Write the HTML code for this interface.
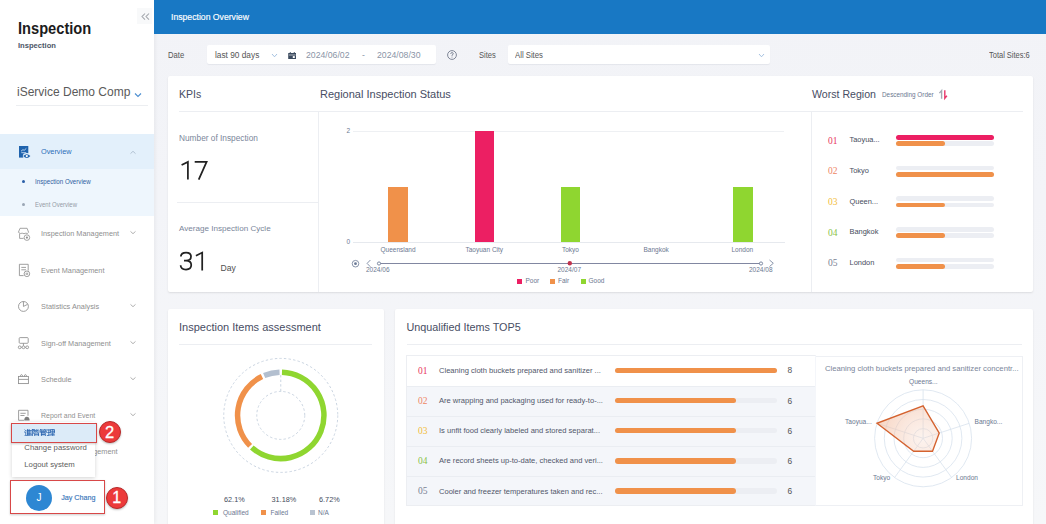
<!DOCTYPE html>
<html><head><meta charset="utf-8">
<style>
*{margin:0;padding:0;box-sizing:border-box}
html,body{width:1046px;height:524px;overflow:hidden;background:linear-gradient(#f2f3f7 0,#f3f4f8 200px,#f6f7f9 524px);font-family:"Liberation Sans",sans-serif;position:relative}
.a{position:absolute;white-space:nowrap}
.sb{position:absolute;left:0;top:0;width:154px;height:524px;background:#fff;box-shadow:1px 0 4px rgba(0,0,0,.06)}
.mi{position:absolute;left:41px;font-size:7.5px;color:#8f8f8f;line-height:10px;transform:scaleX(0.975);transform-origin:0 0}
.chev{position:absolute;left:129px;width:8px;height:5px}
.card{position:absolute;background:#fff;box-shadow:0 1px 2px rgba(0,0,0,.1);border-radius:2px}
.ttl{position:absolute;font-size:11px;color:#474d63;line-height:14px}
.lbl{font-size:6.5px;color:#6c7891;line-height:8px}
.rk{font-family:"Liberation Serif",serif;font-size:9.5px;line-height:10px}
</style></head><body>

<!-- sidebar -->
<div class="sb">
  <div class="a" style="left:137px;top:8px;width:15px;height:16px;background:#f8f9fa"></div>
  <svg class="a" style="left:140px;top:12px" width="10" height="9" viewBox="0 0 10 9"><path d="M5 1.5 L2 4.6 L5 7.7 M9 1.5 L6 4.6 L9 7.7" fill="none" stroke="#a3a7ad" stroke-width="1.05"/></svg>
  <div class="a" style="left:17.5px;top:17.5px;font-size:16.3px;font-weight:bold;color:#1c1c1c;line-height:20px;transform:scaleX(0.9);transform-origin:0 0">Inspection</div>
  <div class="a" style="left:18px;top:41px;font-size:7.6px;font-weight:bold;color:#4d5667;line-height:10px">Inspection</div>
  <div class="a" style="left:17px;top:84.5px;font-size:12px;color:#5a5a5a;line-height:15px">iService Demo Comp</div>
  <svg class="a" style="left:134px;top:92px" width="8" height="6" viewBox="0 0 8 6"><path d="M1 1.5 L4 4.5 L7 1.5" fill="none" stroke="#4a8ed0" stroke-width="1.1"/></svg>
  <div class="a" style="left:16px;top:105px;width:132px;height:1px;background:#eceef1"></div>

  <!-- overview -->
  <div class="a" style="left:0;top:133.5px;width:154px;height:35.5px;background:#e3f0fb"></div>
  <div class="a" style="left:0;top:169px;width:154px;height:47px;background:#eef6fd"></div>
  <svg class="a" style="left:12px;top:140px" width="24" height="24" viewBox="12 140 24 24"><rect x="19" y="146" width="9.3" height="11.6" fill="#1f63ad"/><path d="M21 151.2 L23 149.6 L24.1 150.4 L26.3 148.4 M21.3 152.7 L26.2 152.7" stroke="#dbe9f7" stroke-width="0.8" fill="none"/><ellipse cx="26.8" cy="156.1" rx="4" ry="3" fill="#e4f0fb"/><path d="M23.2 156.1 Q26.8 152.2 30.4 156.1 Q26.8 160 23.2 156.1 Z" fill="#1f63ad"/><circle cx="26.8" cy="156.1" r="1.1" fill="#fff"/></svg>
  <div class="mi" style="top:147px;color:#2a6db8">Overview</div>
  <svg class="chev" style="top:149.5px" viewBox="0 0 8 5"><path d="M1.5 3.6 L4 1.3 L6.5 3.6" fill="none" stroke="#a9b9cb" stroke-width="0.85"/></svg>
  <div class="a" style="left:22px;top:180px;width:3px;height:3px;border-radius:50%;background:#2a5fa8"></div>
  <div class="a" style="left:35px;top:177px;font-size:6.8px;color:#2f5f9f;line-height:9px;transform:scaleX(0.91);transform-origin:0 0">Inspection Overview</div>
  <div class="a" style="left:22px;top:203px;width:3px;height:3px;border-radius:50%;background:#9aa6b5"></div>
  <div class="a" style="left:35px;top:200.3px;font-size:6.6px;color:#959ca6;line-height:9px;transform:scaleX(0.91);transform-origin:0 0">Event Overview</div>

  <!-- inspection mgmt -->
  <svg class="a" style="left:12px;top:222px" width="24" height="24" viewBox="12 222 24 24"><g fill="none" stroke="#8e8e8e" stroke-width="0.8"><path d="M20 228.3 L27.1 228.3 L28.6 232.3 Q27.6 234.2 25.8 233.2 Q24 234.2 22.2 233.2 Q20.4 234.2 18.4 232.3 Z"/><path d="M19.6 233.6 L19.6 238.4 L23.6 238.4"/><circle cx="26.9" cy="237.6" r="2.8"/></g><circle cx="26.9" cy="237.6" r="1.1" fill="#8e8e8e"/></svg>
  <div class="mi" style="top:229px">Inspection Management</div>
  <svg class="chev" style="top:230.4px" viewBox="0 0 8 5"><path d="M1.5 1.4 L4 3.7 L6.5 1.4" fill="none" stroke="#a3a3a3" stroke-width="0.85"/></svg>

  <svg class="a" style="left:12px;top:258px" width="24" height="24" viewBox="12 258 24 24"><g fill="none" stroke="#8e8e8e" stroke-width="0.85"><path d="M23.6 275.6 L19.4 275.6 L19.4 264.3 L28.2 264.3 L28.2 270.6"/><path d="M21.3 267.4 L26 267.4 M21.3 269.8 L26 269.8"/><circle cx="26.9" cy="273.8" r="2.8"/><rect x="26" y="273.1" width="1.8" height="1.4" stroke-width="0.6"/></g></svg>
  <div class="mi" style="top:265.5px">Event Management</div>

  <svg class="a" style="left:12px;top:295px" width="24" height="24" viewBox="12 295 24 24"><g fill="none" stroke="#8e8e8e" stroke-width="0.85"><circle cx="23.45" cy="306.45" r="4.95"/><path d="M23.45 301.5 L23.45 306.45 L27.6 304.3"/></g></svg>
  <div class="mi" style="top:302px">Statistics Analysis</div>
  <svg class="chev" style="top:303px" viewBox="0 0 8 5"><path d="M1.5 1.4 L4 3.7 L6.5 1.4" fill="none" stroke="#a3a3a3" stroke-width="0.85"/></svg>

  <svg class="a" style="left:12px;top:331px" width="24" height="24" viewBox="12 331 24 24"><g fill="none" stroke="#8e8e8e" stroke-width="0.85"><rect x="19.2" y="337.6" width="9" height="5.7" rx="0.9"/><path d="M23.45 343.3 L23.45 345.8 M21.1 347.3 L21.9 347.3 M25 347.3 L25.8 347.3"/><circle cx="19.7" cy="347.3" r="1.4"/><circle cx="23.45" cy="347.3" r="1.4"/><circle cx="27.2" cy="347.3" r="1.4"/></g></svg>
  <div class="mi" style="top:338.5px">Sign-off Management</div>
  <svg class="chev" style="top:339.6px" viewBox="0 0 8 5"><path d="M1.5 1.4 L4 3.7 L6.5 1.4" fill="none" stroke="#a3a3a3" stroke-width="0.85"/></svg>

  <svg class="a" style="left:12px;top:367px" width="24" height="24" viewBox="12 367 24 24"><g fill="none" stroke="#8e8e8e" stroke-width="0.85"><rect x="18.5" y="376.4" width="9.9" height="7.2"/><path d="M18.5 379.4 L28.4 379.4"/><path d="M20.6 376.4 L20.6 375.2 Q21.5 373.9 22.4 375.2 L22.4 376.4 M24.5 376.4 L24.5 375.2 Q25.4 373.9 26.3 375.2 L26.3 376.4"/></g></svg>
  <div class="mi" style="top:374.5px">Schedule</div>
  <svg class="chev" style="top:375.7px" viewBox="0 0 8 5"><path d="M1.5 1.4 L4 3.7 L6.5 1.4" fill="none" stroke="#a3a3a3" stroke-width="0.85"/></svg>

  <svg class="a" style="left:12px;top:403px" width="24" height="24" viewBox="12 403 24 24"><g fill="none" stroke="#8e8e8e" stroke-width="0.85"><path d="M24 420.3 L18.6 420.3 L18.6 410.3 L28 410.3 L28 415.8"/><path d="M20.4 413.3 L25.7 413.3 M20.4 415.5 L24.5 415.5"/></g><path d="M24.2 420.6 Q24.2 416.8 26.9 416.8 Q29.6 416.8 29.6 420.6 Z" fill="#7d7d7d"/></svg>
  <div class="mi" style="top:411px;font-size:7.15px">Report and Event</div>
  <svg class="chev" style="top:411.6px" viewBox="0 0 8 5"><path d="M1.5 1.4 L4 3.7 L6.5 1.4" fill="none" stroke="#a3a3a3" stroke-width="0.85"/></svg>

  <div class="mi" style="top:447px;left:43.5px">Approval Management</div>

  <!-- popup -->
  <div class="a" style="left:12px;top:422px;width:83px;height:55px;background:#fff;box-shadow:0 1px 4px rgba(0,0,0,.18)"></div>
  <div class="a" style="left:10.8px;top:422.6px;width:86.3px;height:20px;background:#dcebf8;border:1.7px solid #d84848;box-shadow:0 1px 2px rgba(0,0,0,.2)"></div>
  <svg class="a" style="left:24px;top:428.5px" width="31" height="7.5" viewBox="0 0 32 8" preserveAspectRatio="none"><g fill="none" stroke="#2b66b0" stroke-width="0.85" stroke-linecap="square">
<path d="M1 1 L1.6 1.7 M0.5 3.2 L1.8 3.2 L1.8 6.3 M0.3 7.6 Q2 6.6 4 7.2 L7.8 7.6"/>
<path d="M3.8 0.3 L3 2 M3.6 1.5 L3.6 6.3 M5.3 0.3 L5.3 6.2 M3.6 1.6 L7.6 1.6 M3.6 3.1 L7.3 3.1 M3.6 4.6 L7.3 4.6 M3.6 6.1 L7.7 6.1"/>
<path d="M8.7 0.5 L8.7 7.8 M8.7 0.5 L10.2 0.5 L9.4 2.7 L10.3 4 L9.3 5"/>
<path d="M11 0.5 L11 3.2 L12.5 2.8 M11 1.8 L12.3 1.6 M13.3 0.5 L13.3 3 Q13.4 3.5 15.5 3.2 M13.3 1.8 L15 1.2 M11.5 4.3 L15 4.3 L15 7.7 L11.5 7.7 Z M11.5 6 L15 6"/>
<path d="M17.2 0.3 L16.5 1.8 M17 1 L19.3 1 M18 1 L18.5 1.8 M21 0.3 L20.3 1.8 M20.8 1 L23.5 1 M22 1 L22.5 1.8 M16.8 3.5 L16.8 2.6 L23.2 2.6 L23.2 3.5 M18 3.4 L18 7.8 M18 3.7 L22 3.7 L22 5.3 L18 5.3 M18 5.9 L22.3 5.9 L22.3 7.7 L18 7.7"/>
<path d="M24.3 1 L27 1 M24.5 3.8 L26.8 3.8 M25.6 1 L25.6 6.8 M24.2 7 L27.2 6.2 M27.8 0.6 L31.5 0.6 L31.5 4.2 L27.8 4.2 Z M27.8 2.4 L31.5 2.4 M29.65 0.6 L29.65 7.4 M28.2 5.7 L31.2 5.7 M27.5 7.5 L31.9 7.5"/>
</g></svg>
  <div class="a" style="left:24.3px;top:443.3px;font-size:7.75px;color:#5c5c5c;line-height:10px">Change password</div>
  <div class="a" style="left:24.3px;top:459.5px;font-size:7.75px;color:#5c5c5c;line-height:10px">Logout system</div>
  <div class="a" style="left:98.7px;top:421px;width:22px;height:22px;border-radius:50%;background:#ec3a3a;border:1px solid #b92a2a;box-shadow:0 1px 2px rgba(0,0,0,.25);color:#fff;font-size:16.5px;-webkit-text-stroke:0.3px #fff;text-align:center;line-height:20px">2</div>

  <div class="a" style="left:9.8px;top:480.4px;width:95.6px;height:33.4px;border:1.7px solid #d84848;box-shadow:0 1px 2px rgba(0,0,0,.2)"></div>
  <div class="a" style="left:26px;top:485px;width:26px;height:26px;border-radius:50%;background:#2d87d3;color:#fff;font-size:10px;text-align:center;line-height:26px">J</div>
  <div class="a" style="left:61.2px;top:493px;font-size:7.2px;color:#3b78bb;-webkit-text-stroke:0.15px #3b78bb;line-height:10px">Jay Chang</div>
  <div class="a" style="left:105.6px;top:487.3px;width:22px;height:22px;border-radius:50%;background:#ec3a3a;border:1px solid #b92a2a;box-shadow:0 1px 2px rgba(0,0,0,.25);color:#fff;font-size:16px;-webkit-text-stroke:0.3px #fff;text-align:center;line-height:20px">1</div>
</div>

<!-- header -->
<div class="a" style="left:154px;top:0;width:892px;height:34px;background:#1878c4"></div>
<div class="a" style="left:171px;top:11.7px;font-size:8.9px;color:#fff;line-height:10px;-webkit-text-stroke:0.15px #fff;transform:scaleX(0.975);transform-origin:0 0">Inspection Overview</div>

<!-- filters -->
<div class="a" style="left:167.5px;top:49.9px;font-size:8.6px;color:#555;line-height:10px;transform:scaleX(0.89);transform-origin:0 0">Date</div>
<div class="a" style="left:207px;top:45px;width:229px;height:19px;background:#fff;border-radius:2px;box-shadow:0 1px 1px rgba(40,50,80,.07)"></div>
<div class="a" style="left:215px;top:50px;font-size:8.3px;color:#555;line-height:10px">last 90 days</div>
<svg class="a" style="left:271px;top:53px" width="7" height="5" viewBox="0 0 7 5"><path d="M1 1 L3.5 3.8 L6 1" fill="none" stroke="#8fb3d9" stroke-width="0.8"/></svg>
<svg class="a" style="left:287.5px;top:51.6px" width="8.5" height="7.2" viewBox="0 0 8.5 7.2"><rect x="0.2" y="1" width="8.1" height="6.2" rx="0.5" fill="#3b4a5e"/><rect x="0.9" y="2.7" width="6.7" height="0.6" fill="#fff"/><rect x="4.8" y="4.1" width="2" height="1.9" fill="#fff"/><rect x="1.8" y="0" width="0.9" height="1.5" fill="#3b4a5e"/><rect x="5.8" y="0" width="0.9" height="1.5" fill="#3b4a5e"/></svg>
<div class="a" style="left:306px;top:50px;font-size:8.7px;color:#8a94a6;line-height:10px">2024/06/02</div>
<div class="a" style="left:362px;top:50px;font-size:8.7px;color:#8a94a6;line-height:10px">-</div>
<div class="a" style="left:377px;top:50px;font-size:8.7px;color:#8a94a6;line-height:10px">2024/08/30</div>
<svg class="a" style="left:446px;top:49px" width="12" height="12" viewBox="0 0 12 12"><circle cx="6" cy="6" r="4.4" fill="none" stroke="#737b8c" stroke-width="0.9"/><path d="M4.7 4.9 Q4.7 3.6 6 3.6 Q7.3 3.6 7.3 4.8 Q7.3 5.6 6 6 L6 6.8" fill="none" stroke="#737b8c" stroke-width="0.85"/><circle cx="6" cy="8.1" r="0.5" fill="#737b8c"/></svg>
<div class="a" style="left:478.8px;top:49.9px;font-size:8.6px;color:#555;line-height:10px;transform:scaleX(0.88);transform-origin:0 0">Sites</div>
<div class="a" style="left:508px;top:45px;width:262px;height:19px;background:#fff;border-radius:2px;box-shadow:0 1px 1px rgba(40,50,80,.07)"></div>
<div class="a" style="left:514.5px;top:49.9px;font-size:8.6px;color:#555;line-height:10px;transform:scaleX(0.9);transform-origin:0 0">All Sites</div>
<svg class="a" style="left:758px;top:53px" width="7" height="5" viewBox="0 0 7 5"><path d="M1 1 L3.5 3.8 L6 1" fill="none" stroke="#8fb3d9" stroke-width="0.8"/></svg>
<div class="a" style="left:988.5px;top:49.9px;font-size:8.6px;color:#555;line-height:10px;transform:scaleX(0.87);transform-origin:0 0">Total Sites:6</div>

<!-- card 1 -->
<div class="card" style="left:168px;top:76px;width:865px;height:216px"></div>
<div class="ttl" style="left:179px;top:87px;font-size:10.5px">KPIs</div>
<div class="ttl" style="left:320px;top:86.5px">Regional Inspection Status</div>
<div class="ttl" style="left:812px;top:87px;font-size:10.6px">Worst Region</div>
<div class="a" style="left:882px;top:90px;font-size:6.36px;color:#6c7891;line-height:9px">Descending Order</div>
<svg class="a" style="left:935px;top:86px" width="16" height="16" viewBox="935 86 16 16"><path d="M941.6 98.8 L941.6 90.6 L939.4 93.1" fill="none" stroke="#a3a9b3" stroke-width="1.4"/><path d="M944.8 90.2 L944.8 98.3 L946.9 95.8" fill="none" stroke="#e8386a" stroke-width="1.4"/></svg>
<div class="a" style="left:179px;top:110.5px;width:139px;height:1px;background:#eceef2"></div>
<div class="a" style="left:318px;top:110.5px;width:705px;height:1px;background:#eceef2"></div>
<div class="a" style="left:318px;top:111px;width:1px;height:181px;background:#eceef2"></div>
<div class="a" style="left:811px;top:111px;width:1px;height:181px;background:#eceef2"></div>

<div class="a" style="left:179px;top:133px;font-size:8.3px;color:#7a869a;line-height:10px">Number of Inspection</div>
<svg class="a" style="left:0;top:0" width="400" height="300" viewBox="0 0 400 300"><path d="M181.6 165.0 L187.9 161.9 L187.9 179.6 M194.7 161.95 L206.6 161.95 L198.7 179.6" fill="none" stroke="#222" stroke-width="1.75" stroke-linejoin="miter"/></svg>
<div class="a" style="left:177px;top:202px;width:141px;height:1px;background:#eceef2"></div>
<div class="a" style="left:179px;top:224px;font-size:8.1px;color:#7a869a;line-height:10px">Average Inspection Cycle</div>
<svg class="a" style="left:0;top:0" width="400" height="300" viewBox="0 0 400 300"><path d="M180.9 256.6 C180.9 254.1 183.1 252.55 186.1 252.55 C189.1 252.55 191.0 254.2 191.0 256.5 C191.0 258.9 189.1 260.6 186.0 260.6 L184.0 260.6 M186.0 260.6 C189.4 260.6 191.25 262.5 191.25 265.1 C191.25 267.9 189.0 269.55 186.0 269.55 C182.9 269.55 180.65 267.9 180.65 265.3 M195.9 255.7 L202.2 252.55 L202.2 270.4" fill="none" stroke="#222" stroke-width="1.75"/></svg>
<div class="a" style="left:220.5px;top:262.5px;font-size:8.6px;color:#505050;line-height:10px">Day</div>

<!-- bar chart -->
<div class="a lbl" style="left:346.5px;top:126.5px">2</div>
<div class="a lbl" style="left:346.5px;top:237.5px">0</div>
<div class="a" style="left:353px;top:130.5px;width:431px;height:1px;background:#eef0f3"></div>
<div class="a" style="left:353px;top:241.5px;width:432px;height:1px;background:#e6e9ee"></div>
<div class="a" style="left:388px;top:186.5px;width:19.5px;height:55.5px;background:#f0914a"></div>
<div class="a" style="left:474.5px;top:130.5px;width:19.5px;height:111.5px;background:#ec1f63"></div>
<div class="a" style="left:560.5px;top:186.5px;width:19.5px;height:55.5px;background:#8fd630"></div>
<div class="a" style="left:733px;top:186.5px;width:19.5px;height:55.5px;background:#8fd630"></div>
<div class="a lbl" style="left:380.5px;top:245.5px">Queensland</div>
<div class="a lbl" style="left:465.5px;top:245.5px">Taoyuan City</div>
<div class="a lbl" style="left:562px;top:245.5px">Tokyo</div>
<div class="a lbl" style="left:643.5px;top:245.5px">Bangkok</div>
<div class="a lbl" style="left:731.5px;top:245.5px">London</div>
<svg class="a" style="left:350px;top:258px" width="430" height="12" viewBox="350 258 430 12"><circle cx="355.5" cy="263.7" r="3.3" fill="none" stroke="#6b7a96" stroke-width="0.8"/><circle cx="355.5" cy="263.7" r="1.4" fill="#6b7a96"/><path d="M370.4 260 L367.1 263.4 L370.4 266.8" fill="none" stroke="#6b7a96" stroke-width="0.8"/><path d="M379 263.5 L761 263.5" stroke="#7a819c" stroke-width="0.95"/><circle cx="379" cy="263.5" r="1.6" fill="#fff" stroke="#5e6d8c" stroke-width="0.8"/><circle cx="761" cy="263.5" r="1.6" fill="#fff" stroke="#5e6d8c" stroke-width="0.8"/><circle cx="569.8" cy="263.3" r="2.2" fill="#c0334d"/><path d="M769.5 260 L773.3 263.3 L769.5 266.5" fill="none" stroke="#6b7a96" stroke-width="0.8"/></svg>
<div class="a lbl" style="left:366px;top:265.5px">2024/06</div>
<div class="a lbl" style="left:557.5px;top:265.5px">2024/07</div>
<div class="a lbl" style="left:749px;top:265.5px">2024/08</div>
<div class="a" style="left:517px;top:278.5px;width:5.2px;height:5.2px;background:#ec1f63"></div>
<div class="a lbl" style="left:525.5px;top:277px">Poor</div>
<div class="a" style="left:550px;top:278.5px;width:5.2px;height:5.2px;background:#f0914a"></div>
<div class="a lbl" style="left:558px;top:277px">Fair</div>
<div class="a" style="left:580.5px;top:278.5px;width:5.2px;height:5.2px;background:#8fd630"></div>
<div class="a lbl" style="left:588.5px;top:277px">Good</div>

<!-- worst region -->
<div class="a rk" style="left:828px;top:135.5px;color:#e8385e">01</div>
<div class="a" style="left:849.5px;top:135.3px;font-size:7.45px;color:#464c5c;line-height:9px">Taoyua...</div>
<div class="a" style="left:896px;top:134.9px;width:97.8px;height:4.8px;border-radius:3px;background:#ec1f63"></div>
<div class="a" style="left:896px;top:141.2px;width:97.8px;height:4.8px;border-radius:3px;background:#eceef3"></div>
<div class="a" style="left:896px;top:141.2px;width:49.2px;height:4.8px;border-radius:3px;background:#f0914a"></div>
<div class="a rk" style="left:828px;top:166.2px;color:#ee8666">02</div>
<div class="a" style="left:849.5px;top:166.0px;font-size:7.45px;color:#464c5c;line-height:9px">Tokyo</div>
<div class="a" style="left:896px;top:165.6px;width:97.8px;height:4.8px;border-radius:3px;background:#eceef3"></div>
<div class="a" style="left:896px;top:171.9px;width:97.8px;height:4.8px;border-radius:3px;background:#eceef3"></div>
<div class="a" style="left:896px;top:171.9px;width:97.8px;height:4.8px;border-radius:3px;background:#f0914a"></div>
<div class="a rk" style="left:828px;top:196.9px;color:#f2bd3c">03</div>
<div class="a" style="left:849.5px;top:196.7px;font-size:7.45px;color:#464c5c;line-height:9px">Queen...</div>
<div class="a" style="left:896px;top:196.3px;width:97.8px;height:4.8px;border-radius:3px;background:#eceef3"></div>
<div class="a" style="left:896px;top:202.6px;width:97.8px;height:4.8px;border-radius:3px;background:#eceef3"></div>
<div class="a" style="left:896px;top:202.6px;width:49.2px;height:4.8px;border-radius:3px;background:#f0914a"></div>
<div class="a rk" style="left:828px;top:227.6px;color:#8bc34a">04</div>
<div class="a" style="left:849.5px;top:227.4px;font-size:7.45px;color:#464c5c;line-height:9px">Bangkok</div>
<div class="a" style="left:896px;top:227.0px;width:97.8px;height:4.8px;border-radius:3px;background:#eceef3"></div>
<div class="a" style="left:896px;top:233.3px;width:97.8px;height:4.8px;border-radius:3px;background:#eceef3"></div>
<div class="a" style="left:896px;top:233.3px;width:49.2px;height:4.8px;border-radius:3px;background:#f0914a"></div>
<div class="a rk" style="left:828px;top:258.3px;color:#7a8294">05</div>
<div class="a" style="left:849.5px;top:258.1px;font-size:7.45px;color:#464c5c;line-height:9px">London</div>
<div class="a" style="left:896px;top:257.7px;width:97.8px;height:4.8px;border-radius:3px;background:#eceef3"></div>
<div class="a" style="left:896px;top:264.0px;width:97.8px;height:4.8px;border-radius:3px;background:#eceef3"></div>
<div class="a" style="left:896px;top:264.0px;width:49.2px;height:4.8px;border-radius:3px;background:#f0914a"></div>

<!-- card 2 -->
<div class="card" style="left:168px;top:309px;width:216px;height:220px"></div>
<div class="ttl" style="left:179px;top:319.5px">Inspection Items assessment</div>
<div class="a" style="left:179px;top:344px;width:193px;height:1px;background:#eceef2"></div>
<svg class="a" style="left:0;top:0" width="1046" height="524" viewBox="0 0 1046 524">
<circle cx="280.75" cy="415.4" r="57" fill="none" stroke="#c5d0de" stroke-width="0.9" stroke-dasharray="2.4 2.2"/>
<circle cx="280.75" cy="415.4" r="24" fill="none" stroke="#c5d0de" stroke-width="0.9" stroke-dasharray="2.4 2.2"/>
<path d="M280.75 375.0 L280.75 391.4" stroke="#c5d0de" stroke-width="0.9" stroke-dasharray="2.4 2.2"/>
<path d="M281.96 372.22 A43.2 43.2 0 1 1 251.84 447.50" fill="none" stroke="#8fd630" stroke-width="5.5"/>
<path d="M250.10 445.84 A43.2 43.2 0 0 1 261.95 376.51" fill="none" stroke="#f0914a" stroke-width="5.5"/>
<path d="M264.15 375.52 A43.2 43.2 0 0 1 279.54 372.22" fill="none" stroke="#b3bfcf" stroke-width="5.5"/>
</svg>
<div class="a" style="left:224px;top:494.5px;font-size:7.3px;color:#444c5c;line-height:9px">62.1%</div>
<div class="a" style="left:271.5px;top:494.5px;font-size:7.3px;color:#444c5c;line-height:9px">31.18%</div>
<div class="a" style="left:319px;top:494.5px;font-size:7.3px;color:#444c5c;line-height:9px">6.72%</div>
<div class="a" style="left:213px;top:510px;width:5px;height:5px;background:#8fd630"></div>
<div class="a lbl" style="left:223px;top:508.5px">Qualified</div>
<div class="a" style="left:260.5px;top:510px;width:5px;height:5px;background:#f0914a"></div>
<div class="a lbl" style="left:270.5px;top:508.5px">Failed</div>
<div class="a" style="left:309.5px;top:510px;width:5px;height:5px;background:#b9c3d1"></div>
<div class="a lbl" style="left:318px;top:508.5px">N/A</div>

<!-- card 3 -->
<div class="card" style="left:395px;top:309px;width:638px;height:220px"></div>
<div class="ttl" style="left:406.5px;top:319.5px;font-size:10.8px">Unqualified Items TOP5</div>
<div class="a" style="left:407px;top:344px;width:615px;height:1px;background:#eceef2"></div>
<div class="a" style="left:406px;top:355px;width:410px;height:151px;border:1px solid #eceef2;border-right-color:#f4f6fa;background:#f4f6fa"></div>
<div class="a" style="left:407px;top:356px;width:408px;height:29.5px;background:#fff"></div>
<div class="a rk" style="left:418px;top:365.6px;color:#e8385e">01</div>
<div class="a" style="left:439px;font-size:7.57px !important;top:366.1px;font-size:7.3px;color:#51566a;line-height:9px">Cleaning cloth buckets prepared and sanitizer ...</div>
<div class="a" style="left:614.5px;top:367.9px;width:162.5px;height:5.4px;border-radius:3px;background:#eceef3"></div>
<div class="a" style="left:614.5px;top:367.9px;width:162.5px;height:5.4px;border-radius:3px;background:#f0914a"></div>
<div class="a" style="left:787.5px;top:365.4px;font-size:8.4px;color:#555;line-height:10px">8</div>
<div class="a" style="left:407px;top:385.5px;width:408px;height:1px;background:#eaedf2"></div>
<div class="a rk" style="left:418px;top:395.7px;color:#ee8666">02</div>
<div class="a" style="left:439px;font-size:7.57px !important;top:396.2px;font-size:7.3px;color:#51566a;line-height:9px">Are wrapping and packaging used for ready-to-...</div>
<div class="a" style="left:614.5px;top:398.0px;width:162.5px;height:5.4px;border-radius:3px;background:#eceef3"></div>
<div class="a" style="left:614.5px;top:398.0px;width:121.5px;height:5.4px;border-radius:3px;background:#f0914a"></div>
<div class="a" style="left:787.5px;top:395.5px;font-size:8.4px;color:#555;line-height:10px">6</div>
<div class="a" style="left:407px;top:415.7px;width:408px;height:1px;background:#eaedf2"></div>
<div class="a rk" style="left:418px;top:425.8px;color:#f2bd3c">03</div>
<div class="a" style="left:439px;font-size:7.57px !important;top:426.3px;font-size:7.3px;color:#51566a;line-height:9px">Is unfit food clearly labeled and stored separat...</div>
<div class="a" style="left:614.5px;top:428.1px;width:162.5px;height:5.4px;border-radius:3px;background:#eceef3"></div>
<div class="a" style="left:614.5px;top:428.1px;width:121.5px;height:5.4px;border-radius:3px;background:#f0914a"></div>
<div class="a" style="left:787.5px;top:425.6px;font-size:8.4px;color:#555;line-height:10px">6</div>
<div class="a" style="left:407px;top:445.9px;width:408px;height:1px;background:#eaedf2"></div>
<div class="a rk" style="left:418px;top:455.9px;color:#8bc34a">04</div>
<div class="a" style="left:439px;font-size:7.57px !important;top:456.4px;font-size:7.3px;color:#51566a;line-height:9px">Are record sheets up-to-date, checked and veri...</div>
<div class="a" style="left:614.5px;top:458.2px;width:162.5px;height:5.4px;border-radius:3px;background:#eceef3"></div>
<div class="a" style="left:614.5px;top:458.2px;width:121.5px;height:5.4px;border-radius:3px;background:#f0914a"></div>
<div class="a" style="left:787.5px;top:455.7px;font-size:8.4px;color:#555;line-height:10px">6</div>
<div class="a" style="left:407px;top:476.1px;width:408px;height:1px;background:#eaedf2"></div>
<div class="a rk" style="left:418px;top:486.0px;color:#7a8294">05</div>
<div class="a" style="left:439px;font-size:7.57px !important;top:486.5px;font-size:7.3px;color:#51566a;line-height:9px">Cooler and freezer temperatures taken and rec...</div>
<div class="a" style="left:614.5px;top:488.3px;width:162.5px;height:5.4px;border-radius:3px;background:#eceef3"></div>
<div class="a" style="left:614.5px;top:488.3px;width:121.5px;height:5.4px;border-radius:3px;background:#f0914a"></div>
<div class="a" style="left:787.5px;top:485.8px;font-size:8.4px;color:#555;line-height:10px">6</div>
<div class="a" style="left:816px;top:355.5px;width:206.5px;height:150px;border:1px solid #eef0f4;border-left:none;background:#fff"></div>
<div class="a" style="left:825px;top:364.3px;font-size:7.7px;color:#7a869a;line-height:9px">Cleaning cloth buckets prepared and sanitizer concentr...</div>
<svg class="a" style="left:0;top:0" width="1046" height="524" viewBox="0 0 1046 524">
<circle cx="923.1" cy="438.3" r="9.70" fill="none" stroke="#d8e2ee" stroke-width="0.8"/>
<circle cx="923.1" cy="438.3" r="19.40" fill="none" stroke="#d8e2ee" stroke-width="0.8"/>
<circle cx="923.1" cy="438.3" r="29.10" fill="none" stroke="#d8e2ee" stroke-width="0.8"/>
<circle cx="923.1" cy="438.3" r="38.80" fill="none" stroke="#d8e2ee" stroke-width="0.8"/>
<circle cx="923.1" cy="438.3" r="48.50" fill="none" stroke="#d8e2ee" stroke-width="0.8"/>
<path d="M923.1 438.3 L923.10 389.80" stroke="#d8e2ee" stroke-width="0.8"/>
<path d="M923.1 438.3 L969.23 423.31" stroke="#d8e2ee" stroke-width="0.8"/>
<path d="M923.1 438.3 L951.61 477.54" stroke="#d8e2ee" stroke-width="0.8"/>
<path d="M923.1 438.3 L894.59 477.54" stroke="#d8e2ee" stroke-width="0.8"/>
<path d="M923.1 438.3 L876.97 423.31" stroke="#d8e2ee" stroke-width="0.8"/>
<defs><radialGradient id="rg" cx="923.1" cy="438.3" r="48.5" gradientUnits="userSpaceOnUse"><stop offset="0" stop-color="#f6d7c8" stop-opacity="0.3"/><stop offset="1" stop-color="#f2b89a" stop-opacity="0.6"/></radialGradient></defs>
<polygon points="923.10,405.81 939.24,433.05 932.51,451.25 913.69,451.25 876.97,423.31" fill="url(#rg)" stroke="#d4622f" stroke-width="1.35"/>
</svg>
<div class="a lbl" style="left:909px;top:377.5px;font-size:6.6px">Queens...</div>
<div class="a lbl" style="left:974.5px;top:418px;font-size:6.6px">Bangko...</div>
<div class="a lbl" style="left:845px;top:418px;font-size:6.6px">Taoyua...</div>
<div class="a lbl" style="left:873px;top:474px;font-size:6.6px">Tokyo</div>
<div class="a lbl" style="left:956px;top:474px;font-size:6.6px">London</div>

</body></html>
